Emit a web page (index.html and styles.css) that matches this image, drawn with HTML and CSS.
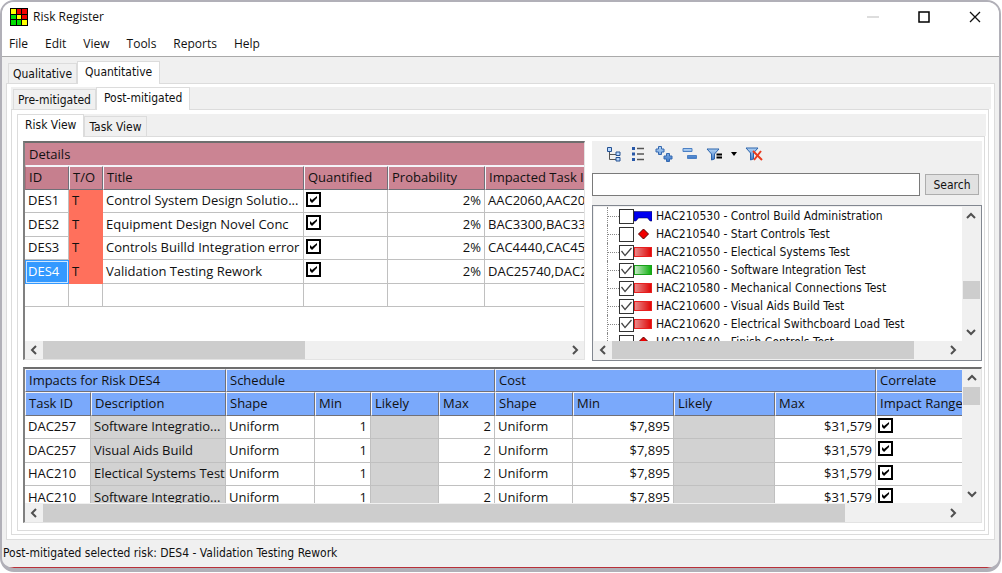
FILE: index.html
```html
<!DOCTYPE html>
<html lang="en">
<head>
    <meta charset="UTF-8">
    <meta name="viewport" content="width=device-width, initial-scale=1.0">
    <title>Risk Register</title>
    <link rel="stylesheet" href="styles.css">
</head>
<body>
<!-- shared icons -->
<svg class="defs" width="0" height="0">
    <defs>
        <linearGradient id="blueFill" x1="0" y1="0" x2="0" y2="1">
            <stop offset="0" stop-color="#b4d4f5"/>
            <stop offset="1" stop-color="#3c78c8"/>
        </linearGradient>
        <symbol id="left" viewBox="0 0 10 10"><path d="M7 1L3 5l4 4" fill="none" stroke="#505050" stroke-width="2"/></symbol>
        <symbol id="right" viewBox="0 0 10 10"><path d="M3 1l4 4-4 4" fill="none" stroke="#505050" stroke-width="2"/></symbol>
        <symbol id="up" viewBox="0 0 10 10"><path d="M1 7l4-4 4 4" fill="none" stroke="#505050" stroke-width="2"/></symbol>
        <symbol id="down" viewBox="0 0 10 10"><path d="M1 3l4 4 4-4" fill="none" stroke="#505050" stroke-width="2"/></symbol>
        <symbol id="milestone" viewBox="0 0 18 12"><path d="M9.500 1l5 5-5 5-5-5z" fill="#f00000" stroke="#500" stroke-width="1"/></symbol>
        <symbol id="summary" viewBox="0 0 18 12"><path d="M0 1.500h18V11h-2l-2.500-3h-9L2 11H0z" fill="#0000f0" stroke="#000040" stroke-width="0.500"/></symbol>
    </defs>
</svg>

<div class="window">
    <header class="titlebar">
        <svg class="app-icon" width="18" height="18" viewBox="0 0 18 18">
            <rect width="18" height="18" fill="#000"/>
            <path d="M1 1h5v5H1zM7 7h4v4H7zM12 12h5v5h-5z" fill="#ff0"/>
            <path d="M7 1h4v5H7zM12 1h5v5h-5zM12 7h5v4h-5z" fill="#f00000"/>
            <path d="M1 7h5v4H1zM1 12h5v5H1zM7 12h4v5H7z" fill="#00e000"/>
        </svg>
        <h1>Risk Register</h1>
        <div class="window-buttons">
            <button type="button" aria-label="Minimize"><svg width="12" height="12"><path d="M0 6h12" stroke="#ddd" stroke-width="2"/></svg></button>
            <button type="button" aria-label="Maximize"><svg width="12" height="12"><rect x="1" y="1" width="10" height="10" fill="none" stroke="#000" stroke-width="1.500"/></svg></button>
            <button type="button" aria-label="Close"><svg width="12" height="12"><path d="M1 1l10 10M11 1L1 11" stroke="#111" stroke-width="1.300"/></svg></button>
        </div>
    </header>

    <nav class="menu">
        <button type="button">File</button>
        <button type="button">Edit</button>
        <button type="button">View</button>
        <button type="button">Tools</button>
        <button type="button">Reports</button>
        <button type="button">Help</button>
    </nav>

    <div class="tabs tabs-main">
        <button type="button">Qualitative</button>
        <button type="button" class="active">Quantitative</button>
    </div>
    <div class="panel panel-main">
        <div class="tabs">
            <button type="button">Pre-mitigated</button>
            <button type="button" class="active">Post-mitigated</button>
        </div>
        <div class="panel panel-mid">
            <div class="tabs tabs-view">
                <button type="button" class="active">Risk View</button>
                <button type="button">Task View</button>
            </div>
            <main class="panel panel-view">
                <div class="split">
                    <section class="grid risks">
                        <div class="grid-body">
                            <table>
                                <colgroup><col class="c-id"><col class="c-to"><col class="c-title"><col class="c-quant"><col class="c-prob"><col class="c-tasks"></colgroup>
                                <thead>
                                    <tr class="group"><th colspan="6">Details</th></tr>
                                    <tr><th class="current">ID</th><th>T/O</th><th>Title</th><th>Quantified</th><th>Probability</th><th>Impacted Task IDs</th></tr>
                                </thead>
                                <tbody>
                                    <tr><td>DES1</td><td class="threat">T</td><td>Control System Design Solutio...</td><td class="check"><input type="checkbox" aria-label="DES1 quantified" checked></td><td class="num">2%</td><td>AAC2060,AAC2070</td></tr>
                                    <tr><td>DES2</td><td class="threat">T</td><td>Equipment Design Novel Conc</td><td class="check"><input type="checkbox" aria-label="DES2 quantified" checked></td><td class="num">2%</td><td>BAC3300,BAC3340</td></tr>
                                    <tr><td>DES3</td><td class="threat">T</td><td>Controls Builld Integration error</td><td class="check"><input type="checkbox" aria-label="DES3 quantified" checked></td><td class="num">2%</td><td>CAC4440,CAC4550</td></tr>
                                    <tr><td class="selected">DES4</td><td class="threat">T</td><td>Validation Testing Rework</td><td class="check"><input type="checkbox" aria-label="DES4 quantified" checked></td><td class="num">2%</td><td>DAC25740,DAC25750</td></tr>
                                    <tr><td></td><td></td><td></td><td></td><td></td><td></td></tr>
                                </tbody>
                            </table>
                        </div>
                        <div class="hscroll"><svg><use href="#left"/></svg><div class="track"><div class="thumb" style="width:50%"></div></div><svg><use href="#right"/></svg></div>
                    </section>

                    <section class="tasks">
                        <div class="toolbar">
                            <button type="button" aria-label="Tree"><svg width="16" height="16" viewBox="0 0 16 16"><path d="M3.500 5v8.500H10M3.500 8.500H10" fill="none" stroke="#555"/><path d="M1.500 1.500h4v4h-4zM10 6h4v3.500h-4zM10 11.500h4V15h-4z" fill="#b8d8ff" stroke="#245090"/></svg></button>
                            <button type="button" aria-label="List"><svg width="16" height="16" viewBox="0 0 16 16"><path d="M2 1h3v3H2zM2 6.500h3v3H2zM2 12h3v3H2z" fill="#2858a8"/><path d="M7 2.500h7M7 8h7M7 13.500h7" stroke="#555" stroke-width="1.500"/></svg></button>
                            <button type="button" aria-label="Expand all"><svg width="20" height="18" viewBox="0 0 20 18"><path d="M4.500 1.500h3v2.500h2.500v3h-2.500v2.500h-3V7H2V4h2.500zM12.500 8.500h3V11H18v3h-2.500v2.500h-3V14H10v-3h2.500z" fill="url(#blueFill)" stroke="#3468b0"/></svg></button>
                            <button type="button" aria-label="Collapse all"><svg width="16" height="16" viewBox="0 0 16 16"><path d="M1 2.500h9v3H1zM5.500 9.500h9v3h-9z" fill="url(#blueFill)" stroke="#4c80c4"/></svg></button>
                            <button type="button" aria-label="Filter" class="filter"><svg width="17" height="16" viewBox="0 0 17 16"><path d="M1 3h12L8.500 8v5l-3 1V8z" fill="url(#blueFill)" stroke="#2c64ac"/><path d="M10.500 8.500H16M10.500 11.500H16" stroke="#000" stroke-width="2"/></svg><svg width="6" height="4" viewBox="0 0 6 4"><path d="M0 0h6L3 4z"/></svg></button>
                            <button type="button" aria-label="Clear filter"><svg width="18" height="16" viewBox="0 0 18 16"><path d="M1 2h12L8.500 7v6l-3 1V7z" fill="url(#blueFill)" stroke="#2c64ac"/><path d="M8 5l9 9M16 5l-7 9" stroke="#e83c20" stroke-width="2"/></svg></button>
                        </div>
                        <form class="search">
                            <input type="text" aria-label="Search tasks">
                            <button type="button">Search</button>
                        </form>
                        <div class="tree">
                            <ul>
                                <li><label><input type="checkbox"><svg><use href="#summary"/></svg>HAC210530 - Control Build Administration</label></li>
                                <li><label><input type="checkbox"><svg><use href="#milestone"/></svg>HAC210540 - Start Controls Test</label></li>
                                <li><label><input type="checkbox" checked><span class="bar red"></span>HAC210550 - Electical Systems Test</label></li>
                                <li><label><input type="checkbox" checked><span class="bar green"></span>HAC210560 - Software Integration Test</label></li>
                                <li><label><input type="checkbox" checked><span class="bar red"></span>HAC210580 - Mechanical Connections Test</label></li>
                                <li><label><input type="checkbox" checked><span class="bar red"></span>HAC210600 - Visual Aids Build Test</label></li>
                                <li><label><input type="checkbox" checked><span class="bar red"></span>HAC210620 - Electrical Swithcboard Load Test</label></li>
                                <li><label><input type="checkbox"><svg><use href="#milestone"/></svg>HAC210640 - Finish Controls Test</label></li>
                            </ul>
                            <div class="vscroll"><svg><use href="#up"/></svg><div class="track"><div class="thumb" style="margin-top:56px"></div></div><svg><use href="#down"/></svg></div>
                            <div class="hscroll"><svg><use href="#left"/></svg><div class="track"><div class="thumb" style="width:91%"></div></div><svg><use href="#right"/></svg></div>
                        </div>
                    </section>
                </div>

                <section class="grid impacts">
                    <div class="grid-body">
                        <table>
                            <colgroup><col class="c-task"><col class="c-desc"><col class="c-shape"><col class="c-small"><col class="c-likely"><col class="c-small"><col class="c-cshape"><col class="c-cost"><col class="c-cost"><col class="c-cost"><col class="c-corr"></colgroup>
                            <thead>
                                <tr class="group"><th colspan="2">Impacts for Risk DES4</th><th colspan="4">Schedule</th><th colspan="4">Cost</th><th>Correlate</th></tr>
                                <tr><th>Task ID</th><th>Description</th><th>Shape</th><th>Min</th><th>Likely</th><th>Max</th><th>Shape</th><th>Min</th><th>Likely</th><th>Max</th><th>Impact Ranges</th></tr>
                            </thead>
                            <tbody>
                                <tr><td>DAC257</td><td class="locked">Software Integratio...</td><td>Uniform</td><td class="num">1</td><td class="locked"></td><td class="num">2</td><td>Uniform</td><td class="num">$7,895</td><td class="locked"></td><td class="num">$31,579</td><td class="check"><input type="checkbox" aria-label="Correlate row 1" checked></td></tr>
                                <tr><td>DAC257</td><td class="locked">Visual Aids Build</td><td>Uniform</td><td class="num">1</td><td class="locked"></td><td class="num">2</td><td>Uniform</td><td class="num">$7,895</td><td class="locked"></td><td class="num">$31,579</td><td class="check"><input type="checkbox" aria-label="Correlate row 2" checked></td></tr>
                                <tr><td>HAC210</td><td class="locked">Electical Systems Test</td><td>Uniform</td><td class="num">1</td><td class="locked"></td><td class="num">2</td><td>Uniform</td><td class="num">$7,895</td><td class="locked"></td><td class="num">$31,579</td><td class="check"><input type="checkbox" aria-label="Correlate row 3" checked></td></tr>
                                <tr><td>HAC210</td><td class="locked">Software Integratio...</td><td>Uniform</td><td class="num">1</td><td class="locked"></td><td class="num">2</td><td>Uniform</td><td class="num">$7,895</td><td class="locked"></td><td class="num">$31,579</td><td class="check"><input type="checkbox" aria-label="Correlate row 4" checked></td></tr>
                            </tbody>
                        </table>
                    </div>
                    <div class="vscroll"><svg><use href="#up"/></svg><div class="track"><div class="thumb"></div></div><svg><use href="#down"/></svg></div>
                    <div class="hscroll"><svg><use href="#left"/></svg><div class="track"><div class="thumb" style="width:89%"></div></div><svg><use href="#right"/></svg></div>
                </section>
            </main>
        </div>
    </div>

    <footer class="status">Post-mitigated selected risk: DES4 - Validation Testing Rework</footer>
</div>
</body>
</html>
```
FILE: styles.css
```css
* {
    box-sizing: border-box;
}
body {
    margin: 0;
    padding: 0 1px 1px 0;
    background-color: white;
    color: #111;
    font-family: "Open Sans", "Segoe UI", sans-serif;
    font-size: 12px;
    line-height: 18px;
}
button, input {
    font: inherit;
    color: inherit;
}
button {
    padding: 0;
    border: none;
    background: none;
}
.defs {
    position: absolute;
}
.window {
    display: flex;
    flex-direction: column;
    min-height: calc(100vh - 1px);
    border: 2px solid #b1b0b8;
    border-bottom-width: 4px;
    border-radius: 14px;
    background-color: #f0f0f0;
    overflow: hidden;
}

/* title and menu */
.titlebar {
    display: flex;
    align-items: center;
    height: 30px;
    padding: 0 18px 0 8px;
    background-color: white;
}
.titlebar h1 {
    margin: 0 0 0 5px;
    font-size: 12px;
    font-weight: normal;
}
.window-buttons {
    display: flex;
    gap: 39px;
    margin-left: auto;
}
.window-buttons button {
    width: 12px;
    height: 12px;
}
svg {
    display: block;
}
.menu {
    display: flex;
    gap: 17px;
    height: 25px;
    padding: 0 7px;
    background-color: white;
    border-bottom: 1px solid #aaa;
}

/* tabs */
.tabs {
    display: flex;
    align-items: flex-end;
    flex: none;
    height: 22px;
    padding-left: 2px;
    background-color: #f0f0f0;
}
.tabs-main {
    height: 26px;
    padding-left: 6px;
}
.tabs-view {
    padding-left: 0;
}
.tabs button {
    height: 20px;
    padding: 0 4px;
    border: 1px solid #dcdcdc;
    border-bottom: none;
    background-color: #f0f0f0;
    font-family: "DejaVu Sans Condensed", Tahoma, sans-serif;
    white-space: nowrap;
}
.tabs button.active {
    position: relative;
    height: 23px;
    margin-bottom: -1px;
    padding: 0 7px 2px;
    background-color: white;
}
.panel {
    display: flex;
    flex-direction: column;
    flex: 1;
    border: 1px solid #dcdcdc;
    background-color: white;
}
.panel-main {
    margin: 0 4px;
    padding: 3px 3px 4px 4px;
}
.panel-mid {
    margin-right: 2px;
    padding: 4px 2px 3px 5px;
}
.panel-view {
    margin-right: 1px;
    padding: 4px 2px 6px 5px;
}

/* grids */
.split {
    display: grid;
    grid-template-columns: minmax(0, 1fr) 390px;
    grid-template-rows: 220px;
    gap: 7px;
    margin-bottom: 6px;
}
.grid {
    display: grid;
    grid-template-rows: minmax(0, 1fr) 18px;
    border-style: solid;
    border-width: 2px 1px 1px 2px;
    border-color: #6e6e6e #e3e3e3 #e3e3e3 #808080;
}
.risks {
    grid-template-columns: minmax(0, 1fr);
    margin-bottom: 1px;
}
.impacts {
    grid-template-columns: minmax(0, 1fr) 19px;
    grid-template-rows: 134px 19px;
    background-color: #f0f0f0;
}
.grid-body {
    overflow: hidden;
    background-color: white;
}
table {
    width: 0;
    table-layout: fixed;
    border-collapse: separate;
    border-spacing: 0;
    font-size: 13px;
}
tr {
    height: 23px;
}
tbody tr:nth-child(even), tr.group + tr {
    height: 24px;
}
th, td {
    padding: 0 3px 2px;
    border-right: 1px solid #c0c0c0;
    border-bottom: 1px solid #c0c0c0;
    font-weight: normal;
    line-height: 18px;
    text-align: left;
    white-space: nowrap;
    overflow: hidden;
}
th {
    border: 1px solid;
    border-color: #f4f4f8 #707078 #707078 #f4f4f8;
}
.risks th {
    background-color: #cb8493;
}
.risks th.current {
    border-left-color: #b06c7c;
    background-color: #c67f8e;
}
.risks .group th {
    border-color: #cb8493 #cb8493 #f4f4f8;
}
.impacts th {
    background-color: #7aa9fb;
}
.c-id { width: 44px; }
.c-to { width: 34px; }
.c-title { width: 201px; }
.c-quant { width: 84px; }
.c-prob { width: 97px; }
.c-tasks { width: 150px; }
.c-task { width: 66px; }
.c-desc { width: 135px; }
.c-shape { width: 89px; }
.c-small { width: 56px; }
.c-likely { width: 68px; }
.c-cshape { width: 78px; }
.c-cost { width: 101px; }
.c-corr { width: 120px; }
.num {
    text-align: right;
}
.threat {
    border-color: #ff705c;
    background-color: #ff705c;
}
.locked {
    padding-right: 0;
    background-color: #d2d2d2;
}
.selected {
    padding: 0 2px 2px;
    border: 1px solid #3399ff;
    outline: 1px solid #cde6ff;
    outline-offset: -2px;
    background-color: #3399ff;
    color: white;
}
.check {
    padding: 2px;
    vertical-align: top;
}
input[type="checkbox"] {
    appearance: none;
    flex: none;
    display: block;
    width: 15px;
    height: 15px;
    margin: 0;
    border: 1px solid #333;
    background-color: white;
}
.check input[type="checkbox"] {
    border: 2px solid black;
}
input[type="checkbox"]:checked::before {
    content: "";
    display: block;
    width: 11px;
    height: 11px;
    margin: 1px;
    background-color: #444;
    clip-path: polygon(0 5px, 1px 4px, 4px 8px, 10px 1px, 11px 2px, 4px 10px);
}
.check input[type="checkbox"]:checked::before {
    margin: 0;
    background-color: black;
    clip-path: polygon(2px 4px, 4px 6px, 9px 2px, 9px 4px, 4px 9px, 2px 7px);
}

/* scrollbars */
.hscroll, .vscroll {
    display: flex;
    align-items: center;
    background-color: #f0f0f0;
}
.hscroll {
    padding: 0 4px;
}
.vscroll {
    flex-direction: column;
    padding: 4px 0;
}
.hscroll svg, .vscroll svg {
    flex: none;
    width: 10px;
    height: 10px;
}
.track {
    flex: 1;
}
.hscroll .track {
    margin: 0 4px;
}
.vscroll .track {
    margin: 4px 0;
}
.thumb {
    width: 17px;
    height: 18px;
    background-color: #cdcdcd;
}

/* task picker */
.tasks {
    display: flex;
    flex-direction: column;
    background-color: #f0f0f0;
}
.toolbar {
    display: flex;
    align-items: center;
    gap: 8px;
    height: 26px;
    padding-left: 14px;
}
.filter {
    display: flex;
    align-items: center;
    gap: 8px;
}
.search {
    display: flex;
    gap: 5px;
    height: 23px;
    margin: 6px 3px 9px 0;
}
.search input {
    flex: 1;
    min-width: 0;
    padding: 0 4px;
    border: 1px solid #7a7a7a;
    background-color: white;
}
.search button {
    width: 54px;
    margin: 1px 0;
    border: 1px solid #adadad;
    background-color: #e1e1e1;
    font-family: "DejaVu Sans Condensed", Tahoma, sans-serif;
}
.tree {
    display: grid;
    grid-template-columns: minmax(0, 1fr) 18px;
    grid-template-rows: minmax(0, 1fr) 18px;
    flex: 1;
    min-height: 0;
    padding: 1px;
    border: 1px solid #828790;
}
.tree ul {
    margin: 0;
    padding: 0 0 0 13px;
    overflow: hidden;
    background-color: white;
    list-style: none;
    font-family: "DejaVu Sans Condensed", Tahoma, sans-serif;
}
.tree li {
    display: flex;
    align-items: center;
    height: 18px;
    border-left: 1px dotted #888;
}
.tree li::before {
    content: "";
    width: 11px;
    border-top: 1px dotted #888;
}
.tree label {
    display: flex;
    align-items: center;
    white-space: nowrap;
}
.tree label svg, .bar {
    width: 18px;
    height: 12px;
    margin-right: 4px;
}
.bar {
    height: 10px;
    border: 1px solid;
}
.red {
    border-color: #e82020;
    background: linear-gradient(to right, #e88888, #e00808);
}
.green {
    border-color: #18a018;
    background: linear-gradient(to right, #c4e8c4, #10b010);
}

.status {
    flex: none;
    height: 28px;
    padding: 4px 1px;
    border-bottom: 1px solid #b83038;
    font-family: "DejaVu Sans Condensed", Tahoma, sans-serif;
}
```
